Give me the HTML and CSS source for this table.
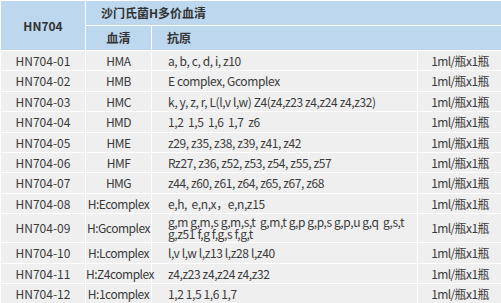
FILE: index.html
```html
<!DOCTYPE html>
<html>
<head>
<meta charset="utf-8">
<link rel="stylesheet" href="styles.css">
</head>
<body>
<table class="t">
<colgroup><col class="c1"><col class="c2"><col class="c3"><col class="c4"></colgroup>
<thead>
<tr class="h1"><th rowspan="2" class="ctr">HN704</th><th colspan="3" class="lft">沙门氏菌H多价血清</th></tr>
<tr class="h2"><th class="ctr">血清</th><th colspan="2" class="lft">抗原</th></tr>
</thead>
<tbody>
<tr><td>HN704-01</td><td class="sr">HMA</td><td class="ag">a, b, c, d, i, z10</td><td class="qt">1ml/瓶x1瓶</td></tr>
<tr><td>HN704-02</td><td class="sr">HMB</td><td class="ag">E complex, Gcomplex</td><td class="qt">1ml/瓶x1瓶</td></tr>
<tr><td>HN704-03</td><td class="sr">HMC</td><td class="ag">k, y, z, r, L(l,v l,w) Z4(z4,z23 z4,z24 z4,z32)</td><td class="qt">1ml/瓶x1瓶</td></tr>
<tr><td>HN704-04</td><td class="sr">HMD</td><td class="ag">1,2&nbsp; 1,5&nbsp; 1,6&nbsp; 1,7&nbsp; z6</td><td class="qt">1ml/瓶x1瓶</td></tr>
<tr><td>HN704-05</td><td class="sr">HME</td><td class="ag">z29, z35, z38, z39, z41, z42</td><td class="qt">1ml/瓶x1瓶</td></tr>
<tr><td>HN704-06</td><td class="sr">HMF</td><td class="ag">Rz27, z36, z52, z53, z54, z55, z57</td><td class="qt">1ml/瓶x1瓶</td></tr>
<tr><td>HN704-07</td><td class="sr">HMG</td><td class="ag">z44, z60, z61, z64, z65, z67, z68</td><td class="qt">1ml/瓶x1瓶</td></tr>
<tr><td>HN704-08</td><td class="sr">H:Ecomplex</td><td class="ag">e,h,&nbsp; e,n,x，e,n,z15</td><td class="qt">1ml/瓶x1瓶</td></tr>
<tr class="two"><td>HN704-09</td><td class="sr">H:Gcomplex</td><td class="ag">g,m g,m,s g,m,s,t&nbsp; g,m,t g,p g,p,s g,p,u g,q&nbsp; g,s,t<br>g,z51 f,g f,g,s f,g,t</td><td class="qt">1ml/瓶x1瓶</td></tr>
<tr><td>HN704-10</td><td class="sr">H:Lcomplex</td><td class="ag">l,v l,w l,z13 l,z28 l,z40</td><td class="qt">1ml/瓶x1瓶</td></tr>
<tr><td>HN704-11</td><td class="sr">H:Z4complex</td><td class="ag">z4,z23 z4,z24 z4,z32</td><td class="qt">1ml/瓶x1瓶</td></tr>
<tr><td>HN704-12</td><td class="sr">H:1complex</td><td class="ag">1,2 1,5 1,6 1,7</td><td class="qt">1ml/瓶x1瓶</td></tr>
</tbody>
</table>
</body>
</html>
```
FILE: styles.css
```css
html, body {
  margin: 0;
  padding: 0;
  background: #ffffff;
}
.t {
  border-collapse: collapse;
  table-layout: fixed;
  width: 502px;
  font-family: "Noto Sans CJK SC", "Noto Sans", sans-serif;
  font-size: 12px;
  color: #3a3a3a;
}
.c1 { width: 85px; }
.c2 { width: 66px; }
.c3 { width: 266px; }
.c4 { width: 85px; }
.t th, .t td {
  border: 1px solid #ffffff;
  padding: 0;
  white-space: nowrap;
}
.t th {
  background: #bdd7ee;
  font-weight: bold;
  color: #333333;
  height: 24px;
  line-height: 12px;
}
.t td {
  background: #efefef;
  text-align: center;
  line-height: 12px;
  padding-top: 4px;
  padding-bottom: 3.4px;
}
.t tr.two td {
  padding-top: 2px;
  padding-bottom: 2px;
}
.t th.ctr { text-align: center; }
.t th.lft { text-align: left; padding-left: 15px; }
.t td.sr { letter-spacing: -0.5px; }
.t td.ag {
  text-align: left;
  padding-left: 16px;
  letter-spacing: -0.4px;
}
.t td.qt { letter-spacing: -0.6px; }
```
